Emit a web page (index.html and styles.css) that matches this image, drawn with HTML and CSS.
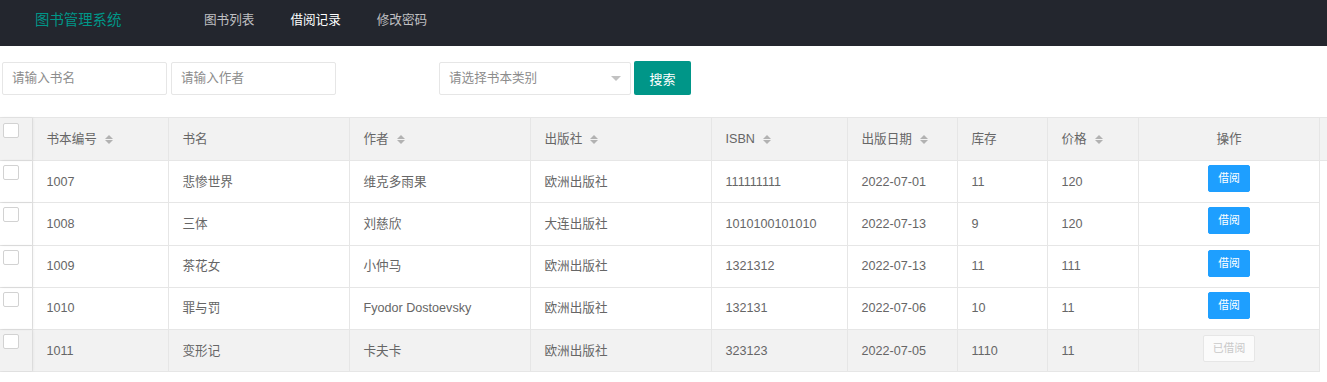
FILE: index.html
```html
<!DOCTYPE html>
<html lang="zh-CN">
<head>
<meta charset="utf-8">
<title>图书管理系统</title>
<link rel="stylesheet" href="styles.css">
</head>
<body>
<header class="topbar">
  <div class="logo">图书管理系统</div>
  <nav class="nav">
    <a class="nav-item">图书列表</a>
    <a class="nav-item active">借阅记录</a>
    <a class="nav-item">修改密码</a>
  </nav>
</header>
<main>
  <form class="search">
    <input class="field" placeholder="请输入书名">
    <input class="field" placeholder="请输入作者">
    <div class="select"><span class="select-text">请选择书本类别</span><i class="caret"></i></div>
    <button type="button" class="btn-search">搜索</button>
  </form>

  <div class="table">
    <div class="row head">
      <div class="cell cb"><span class="check"></span></div>
      <div class="cell">书本编号<span class="sort"></span></div>
      <div class="cell">书名</div>
      <div class="cell">作者<span class="sort"></span></div>
      <div class="cell">出版社<span class="sort"></span></div>
      <div class="cell">ISBN<span class="sort"></span></div>
      <div class="cell">出版日期<span class="sort"></span></div>
      <div class="cell">库存</div>
      <div class="cell">价格<span class="sort"></span></div>
      <div class="cell center">操作</div>
      <div class="cell filler"></div>
    </div>

    <div class="row body">
      <div class="cell cb"><span class="check"></span></div>
      <div class="cell">1007</div>
      <div class="cell">悲惨世界</div>
      <div class="cell">维克多雨果</div>
      <div class="cell">欧洲出版社</div>
      <div class="cell">111111111</div>
      <div class="cell">2022-07-01</div>
      <div class="cell">11</div>
      <div class="cell">120</div>
      <div class="cell op"><button type="button" class="btn-xs">借阅</button></div>
    </div>

    <div class="row body">
      <div class="cell cb"><span class="check"></span></div>
      <div class="cell">1008</div>
      <div class="cell">三体</div>
      <div class="cell">刘慈欣</div>
      <div class="cell">大连出版社</div>
      <div class="cell">1010100101010</div>
      <div class="cell">2022-07-13</div>
      <div class="cell">9</div>
      <div class="cell">120</div>
      <div class="cell op"><button type="button" class="btn-xs">借阅</button></div>
    </div>

    <div class="row body">
      <div class="cell cb"><span class="check"></span></div>
      <div class="cell">1009</div>
      <div class="cell">茶花女</div>
      <div class="cell">小仲马</div>
      <div class="cell">欧洲出版社</div>
      <div class="cell">1321312</div>
      <div class="cell">2022-07-13</div>
      <div class="cell">11</div>
      <div class="cell">111</div>
      <div class="cell op"><button type="button" class="btn-xs">借阅</button></div>
    </div>

    <div class="row body">
      <div class="cell cb"><span class="check"></span></div>
      <div class="cell">1010</div>
      <div class="cell">罪与罚</div>
      <div class="cell">Fyodor Dostoevsky</div>
      <div class="cell">欧洲出版社</div>
      <div class="cell">132131</div>
      <div class="cell">2022-07-06</div>
      <div class="cell">10</div>
      <div class="cell">11</div>
      <div class="cell op"><button type="button" class="btn-xs">借阅</button></div>
    </div>

    <div class="row body hover">
      <div class="cell cb"><span class="check"></span></div>
      <div class="cell">1011</div>
      <div class="cell">变形记</div>
      <div class="cell">卡夫卡</div>
      <div class="cell">欧洲出版社</div>
      <div class="cell">323123</div>
      <div class="cell">2022-07-05</div>
      <div class="cell">1110</div>
      <div class="cell">11</div>
      <div class="cell op"><button type="button" class="btn-xs disabled">已借阅</button></div>
    </div>
  </div>
</main>
</body>
</html>
```

FILE: styles.css
```css
* { box-sizing: border-box; }

html, body {
  margin: 0;
  padding: 0;
  background: #fff;
}

body {
  font-family: "Liberation Sans", "Noto Sans CJK SC", sans-serif;
  font-size: 12.6px;
  line-height: 20px;
  color: #666;
}

/* ---------- top bar ---------- */
.topbar {
  height: 46px;
  background: #23262e;
  display: flex;
  align-items: center;
  padding-bottom: 6px;
}

.logo {
  width: 186px;
  padding-left: 35px;
  font-size: 14.4px;
  color: #009688;
}

.nav {
  display: flex;
}

.nav-item {
  padding: 0 18px;
  font-size: 12.6px;
  color: rgba(255, 255, 255, 0.72);
  cursor: pointer;
}

.nav-item.active {
  color: #fff;
}

/* ---------- search ---------- */
.search {
  display: flex;
  align-items: center;
  gap: 4px;
  padding: 15px 0 0 2px;
  margin: 0;
}

.field,
.select {
  width: 165px;
  height: 33px;
  border: 1px solid #e6e6e6;
  border-radius: 2px;
  padding: 0 9px;
  font-family: inherit;
  font-size: 12.6px;
  line-height: 20px;
  color: #666;
  background: #fff;
  outline: none;
}

.field::placeholder {
  color: #8c8c8c;
}

.select {
  width: 192px;
  margin-left: 99px;
  display: flex;
  align-items: center;
  justify-content: space-between;
  color: #8c8c8c;
}

.caret {
  width: 0;
  height: 0;
  border-top: 5px solid #c2c2c2;
  border-left: 5px solid transparent;
  border-right: 5px solid transparent;
}

.btn-search {
  width: 57px;
  height: 34px;
  border: none;
  border-radius: 2px;
  background: #009688;
  color: #fff;
  font-family: inherit;
  font-size: 13px;
  padding: 0;
  margin-left: -1px;
  cursor: pointer;
}

/* ---------- table ---------- */
.table {
  margin-top: 22px;
  border-top: 1px solid #e6e6e6;
  width: 1327px;
}

.row {
  display: grid;
  border-bottom: 1px solid #e6e6e6;
}

.row.head {
  grid-template-columns: 32px 136px 181px 181px 181px 136px 110px 90px 91px 181px 8px;
  height: 43px;
  background: #f2f2f2;
}

.row.body {
  grid-template-columns: 32px 136px 181px 181px 181px 136px 110px 90px 91px 182px;
  width: 1320px;
  height: 42.25px;
}

.row.hover {
  background: #f2f2f2;
}

.cell {
  display: flex;
  align-items: center;
  padding: 0 0 0 13.5px;
  border-left: 1px solid #e6e6e6;
  white-space: nowrap;
  overflow: hidden;
}

.row.body .cell:last-child {
  border-right: 1px solid #e6e6e6;
}

.cell.center {
  justify-content: center;
  padding: 0;
}

.cell.filler {
  padding: 0;
}

.cell.cb {
  border-left: none;
  padding: 4px 0 0 3px;
  align-items: flex-start;
  overflow: visible;
  box-shadow: 1px 0 3px rgba(0, 0, 0, 0.07);
  position: relative;
  z-index: 1;
}

.row.head .cell.cb {
  padding-top: 5px;
}

.check {
  display: block;
  width: 16px;
  height: 15px;
  border: 1px solid #d2d2d2;
  border-radius: 2px;
  background: #fff;
}

.sort {
  display: inline-flex;
  flex-direction: column;
  gap: 1.5px;
  margin-left: 8px;
  margin-top: 1px;
}

.sort::before,
.sort::after {
  content: "";
  width: 0;
  height: 0;
  border-left: 4.5px solid transparent;
  border-right: 4.5px solid transparent;
}

.sort::before {
  border-bottom: 4.5px solid #b2b2b2;
}

.sort::after {
  border-top: 4.5px solid #b2b2b2;
}

.cell.op {
  justify-content: center;
  align-items: flex-start;
  padding: 4px 0 0;
}

.btn-xs {
  height: 27px;
  padding: 0 9px;
  border: 1px solid #1e9fff;
  border-radius: 2px;
  background: #1e9fff;
  color: #fff;
  font-family: inherit;
  font-size: 10.8px;
  line-height: 25px;
  cursor: pointer;
}

.btn-xs.disabled {
  background: #fbfbfb;
  border-color: #e6e6e6;
  color: #c9c9c9;
  cursor: not-allowed;
  margin-top: 1px;
}
```
